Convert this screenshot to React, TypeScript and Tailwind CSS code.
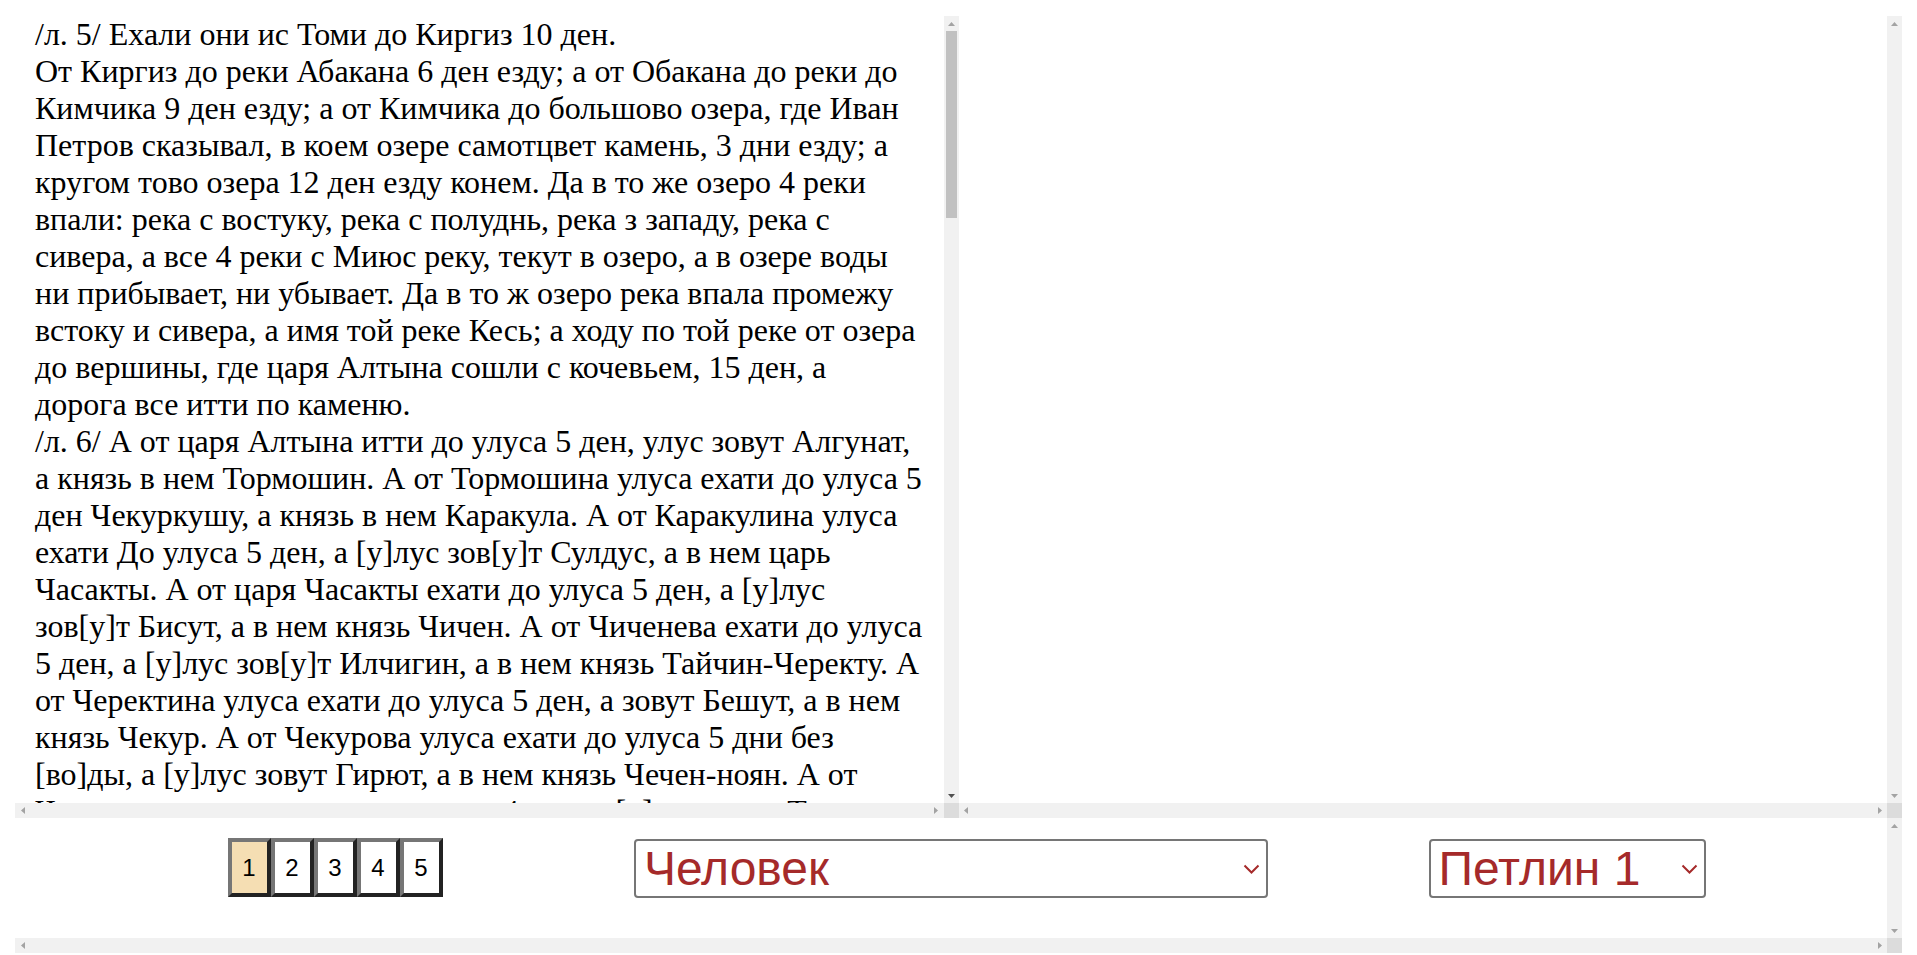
import { useState } from "react";

const lines = [
  "/л. 5/ Ехали они ис Томи до Киргиз 10 ден.",
  "От Киргиз до реки Абакана 6 ден езду; а от Обакана до реки до",
  "Кимчика 9 ден езду; а от Кимчика до большово озера, где Иван",
  "Петров сказывал, в коем озере самотцвет камень, 3 дни езду; а",
  "кругом тово озера 12 ден езду конем. Да в то же озеро 4 реки",
  "впали: река с востуку, река с полуднь, река з западу, река с",
  "сивера, а все 4 реки с Миюс реку, текут в озеро, а в озере воды",
  "ни прибывает, ни убывает. Да в то ж озеро река впала промежу",
  "встоку и сивера, а имя той реке Кесь; а ходу по той реке от озера",
  "до вершины, где царя Алтына сошли с кочевьем, 15 ден, а",
  "дорога все итти по каменю.",
  "/л. 6/ А от царя Алтына итти до улуса 5 ден, улус зовут Алгунат,",
  "а князь в нем Тормошин. А от Тормошина улуса ехати до улуса 5",
  "ден Чекуркушу, а князь в нем Каракула. А от Каракулина улуса",
  "ехати До улуса 5 ден, а [у]лус зов[у]т Сулдус, а в нем царь",
  "Часакты. А от царя Часакты ехати до улуса 5 ден, а [у]лус",
  "зов[у]т Бисут, а в нем князь Чичен. А от Чиченева ехати до улуса",
  "5 ден, а [у]лус зов[у]т Илчигин, а в нем князь Тайчин-Черекту. А",
  "от Черектина улуса ехати до улуса 5 ден, а зовут Бешут, а в нем",
  "князь Чекур. А от Чекурова улуса ехати до улуса 5 дни без",
  "[во]ды, а [у]лус зовут Гирют, а в нем князь Чечен-ноян. А от",
  "Чечен-нояна улуса ехати до улуса 4 дни, а [у]лус зовут Тангут,",
  "а в нем князь Тургень. А от Тангута ехати до улуса 4 дни, а",
  "улус зовут Урлут, а в нем князь Бурлат. А от Бурлатова улуса",
  "ехати до улуса 3 дни, а улус зовут Тугулук, а в нем князь",
  "Кулдай. А от Кулдаева улуса ехати до Мугальского царства 10",
  "ден, а в том царстве царь Бушухту-хан, а кочюют они по",
  "степи, а городов у них нет.",
  "/л. 7/ А от Мугальского царства ехати до Китайского города",
  "Шеломы 10 ден, а дорога все степью, а воды в той степи мало,",
  "а кормы конские добрые. А Китайской стене конца не ведают,",
  "а стоит та стена от моря и до Бухарской земли, а по стене",
  "башни частые, а на башнях сторожи стоят денно и нощно.",
  "А в стене ворота, а у ворот стоит застава, а без царева",
  "указу в город не пущают. А город Шеломы каменной, а",
  "стоит на ровном месте, а в городе торги великие, а торгуют",
  "всякими товары: камками и бархаты, и атласы, и зуфьми, и",
  "сахаром, и гвоздикою, и корицею, и иным всяким узорочьем.",
  "А от Шеломы ехати до Китайского города Куски 2 дни, а город",
  "Куска каменной же, а в нем воевода, а люди в нем торговые.",
  "А от Куски ехати до города Шираалы 2 дни, а тот город",
  "каменной же, а посады около города великие, а по улицам",
  "лавки, а в лавках всякие товары, а пьяного питья в том",
  "городе нет, а пьют они вино горячее и квас из пшена.",
  "/л. 8/ А от Шираалы ехати до города Тайтуна 2 дни, а город",
  "Тайтун каменной, а стоит на реке, а через реку мост",
  "каменной же, а под мостом суды ходят. А от Тайтуна ехати до",
  "города Баиня 2 дни, а тот город велик, а людей в нем много,",
  "а хлеба всякого много: пшеницы и ячменю, и пшена, и гороху.",
  "А от Баиня ехати до города Ямбоя 3 дни, а город Ямбой",
  "каменной же, а около города ров, а во рву вода, а у ворот",
  "пушки. А от Ямбоя ехати до города Калгана 2 дни, а тот город",
  "Калган на горе, а под горою река, а на реке мельницы.",
  "А от Калгана ехати до Большого Китаю до города Сюнфу 3 дни,",
  "а тот город велик гораздо, а стоит на ровном месте, а в",
  "городе палаты каменные, а покрыты черепицею, а на палатах",
  "писаны травы и звери всякие золотом и лазорью. А двор",
  "царской посреди города, а около двора стена каменная, а",
  "на стене башни, а в воротах стоят сторожи с копьи и с",
  "луки. А царя Табун им видети не довелось, потому что к",
  "царю без поминков не ходят, а поминков с ними не было.",
  "/л. 9/ А в Китайском государстве люди многие, а ходят",
  "пеши и на конях, и на ослах, и на верблюдах, а носят платье",
  "долгое, а рукава у платья широкие, а волосы на головах",
  "вяжут, а жонки их ходят в платье цветном, а ноги у них",
  "малые. А вера у них своя, а молятся они болваном, а",
  "кумирни у них каменные, а в кумирнях болваны великие.",
  "А торг у них серебром, а серебро у них не чеканное, а",
  "режут его по весу. А хлеб у них всякой родится, и овощи",
  "многие: яблоки, и груши, и дыни, и арбузы, и огурцы, и",
  "лук, и чеснок, и редька, и иные многие овощи, кои в",
  "Руской земле не родятся. А зимы у них теплые, а снегу",
  "мало бывает, а лето жаркое, а дожди бывают частые.",
  "/л. 10/ А от Сюнфу назад ехали они до Калгана тою же",
  "дорогою, а от Калгана до Мугальской земли, а от Мугаль",
  "до улусов тою ж дорогою, а до Томского города шли они",
  "степью и каменем, а воды было мало, а кони у них",
  "пристали, и они шли пеши многие дни. А пришли они в",
  "Томской город в осень, и про Китайское государство",
  "сказывали воеводам, и роспись свою подали за руками.",
];

const pages = [1, 2, 3, 4, 5];

const ARROW_LIGHT = "#a3a3a3";
const ARROW_DARK = "#505050";

// little triangles used on the scrollbar buttons
function Arrow({ dir, color }: { dir: "up" | "down" | "left" | "right"; color: string }) {
  const points = {
    up: "3.5,0 7,4 0,4",
    down: "0,0 7,0 3.5,4",
    left: "4,0 4,7 0,3.5",
    right: "0,0 4,3.5 0,7",
  }[dir];
  const vertical = dir === "up" || dir === "down";
  return (
    <svg
      width={vertical ? 7 : 4}
      height={vertical ? 4 : 7}
      viewBox={vertical ? "0 0 7 4" : "0 0 4 7"}
    >
      <polygon points={points} fill={color} />
    </svg>
  );
}

function VScrollbar({ thumb, downColor = ARROW_LIGHT }: { thumb?: number; downColor?: string }) {
  return (
    <div className="flex w-[15px] shrink-0 flex-col bg-[#f1f1f1]">
      <div className="flex h-[15px] items-center justify-center">
        <Arrow dir="up" color={ARROW_LIGHT} />
      </div>
      <div className="flex-1">
        {thumb ? <div className="mx-[2px] bg-[#c1c1c1]" style={{ height: thumb }}></div> : null}
      </div>
      <div className="flex h-[15px] items-center justify-center">
        <Arrow dir="down" color={downColor} />
      </div>
    </div>
  );
}

function HScrollbar() {
  return (
    <div className="flex h-[15px] flex-1 bg-[#f1f1f1]">
      <div className="flex w-[15px] items-center justify-center">
        <Arrow dir="left" color={ARROW_LIGHT} />
      </div>
      <div className="flex-1"></div>
      <div className="flex w-[15px] items-center justify-center">
        <Arrow dir="right" color={ARROW_LIGHT} />
      </div>
    </div>
  );
}

function ScrollPane({
  children,
  thumb,
  downColor,
  className = "",
}: {
  children?: React.ReactNode;
  thumb?: number;
  downColor?: string;
  className?: string;
}) {
  return (
    <div className={"flex min-w-0 flex-col " + className}>
      <div className="flex min-h-0 flex-1">
        <div className="min-w-0 flex-1 overflow-hidden">{children}</div>
        <VScrollbar thumb={thumb} downColor={downColor} />
      </div>
      <div className="flex h-[15px]">
        <HScrollbar />
        <div className="w-[15px] bg-[#dcdcdc]"></div>
      </div>
    </div>
  );
}

function Chevron() {
  return (
    <svg
      width="17"
      height="10"
      viewBox="0 0 17 10"
      className="pointer-events-none absolute right-[8px] top-1/2 -translate-y-1/2"
    >
      <path d="M1.5 1.5l7 7 7-7" fill="none" stroke="#a52a2a" strokeWidth="2" />
    </svg>
  );
}

const selectClass =
  "h-[59px] appearance-none rounded-[4px] border-2 border-[#767676] bg-white pl-[8px] font-['Liberation_Sans',Arial,sans-serif] text-[48px] leading-[normal] text-[#a52a2a] outline-none";

export default function App() {
  const [page, setPage] = useState(1);
  const [kind, setKind] = useState("Человек");
  const [source, setSource] = useState("Петлин 1");

  return (
    <div className="flex h-[955px] flex-col bg-white px-[15px] pt-[16px]">
      {/* text panels */}
      <div className="flex h-[802px]">
        <ScrollPane className="flex-1" thumb={187} downColor={ARROW_DARK}>
          <div className="pl-[20px] font-['Liberation_Serif',serif] text-[32px] leading-[normal] text-black">
            {lines.map((line, i) => (
              <div key={i} className="whitespace-nowrap">
                {line}
              </div>
            ))}
          </div>
        </ScrollPane>
        <ScrollPane className="flex-1" />
      </div>

      {/* controls */}
      <ScrollPane className="h-[135px]">
        <div className="mx-auto grid w-[1848px] grid-cols-3 pt-[20px]">
          <div className="flex justify-center">
            <div className="flex">
              {pages.map((p) => (
                <button
                  key={p}
                  onClick={() => setPage(p)}
                  className={
                    "flex h-[59px] w-[43px] items-center justify-center border-4 border-t-[#767676] border-l-[#767676] border-b-[#222] border-r-[#222] font-['Liberation_Sans',Arial,sans-serif] text-[24px] leading-[normal] text-black " +
                    (p === page ? "bg-[#f5deb3]" : "bg-white")
                  }
                >
                  {p}
                </button>
              ))}
            </div>
          </div>

          <div className="flex justify-center">
            <div className="relative mt-[1px]">
              <select
                value={kind}
                onChange={(e) => setKind(e.target.value)}
                className={selectClass + " w-[634px]"}
              >
                <option>Человек</option>
                <option>Место</option>
                <option>Народ</option>
              </select>
              <Chevron />
            </div>
          </div>

          <div className="flex justify-center">
            <div className="relative mt-[1px]">
              <select
                value={source}
                onChange={(e) => setSource(e.target.value)}
                className={selectClass + " w-[277px]"}
              >
                <option>Петлин 1</option>
                <option>Петлин 2</option>
                <option>Петлин 3</option>
              </select>
              <Chevron />
            </div>
          </div>
        </div>
      </ScrollPane>
    </div>
  );
}
